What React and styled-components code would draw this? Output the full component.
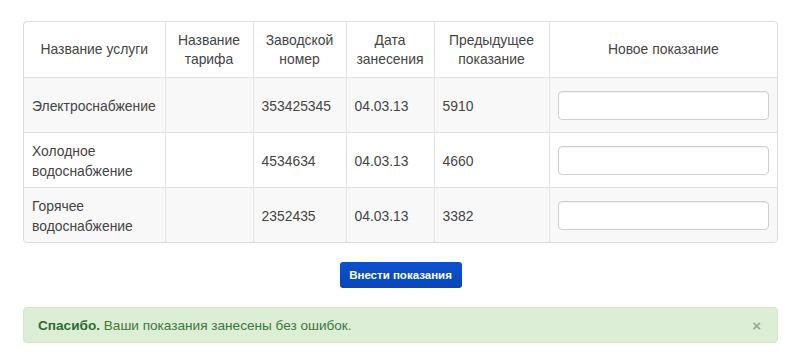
import React from "react";
import styled, { createGlobalStyle } from "styled-components";

const Global = createGlobalStyle`
  html, body { margin: 0; padding: 0; background: #fff; }
  body { font-family: "Liberation Sans", Arial, sans-serif; color: #333; }
`;

const Page = styled.div`
  width: 800px;
  height: 354px;
  box-sizing: border-box;
  padding: 21px 22px 0 23px;
  display: flex;
  flex-direction: column;
  align-items: stretch;
`;

const TableWrap = styled.div`
  border: 1px solid #dcdcdc;
  border-radius: 4px;
  overflow: hidden;
`;

const Table = styled.table`
  width: 100%;
  border-collapse: collapse;
  table-layout: fixed;
  font-size: 13.9px;
`;

const Th = styled.th`
  font-weight: normal;
  text-align: center;
  vertical-align: middle;
  color: #444;
  line-height: 19px;
  padding: 0 6px;
  height: 55px;
  border-left: 1px solid #e2e2e2;
  &:first-child { border-left: none; }
`;

const Tr = styled.tr`
  background: ${(p) => (p.$striped ? "#f8f8f8" : "#fff")};
  border-top: 1px solid #e2e2e2;
`;

const Td = styled.td`
  color: #444;
  vertical-align: middle;
  line-height: 20px;
  padding: 1px 8px 0;
  height: 53px;
  border-left: 1px solid #e2e2e2;
  &:first-child { border-left: none; }
`;

const Input = styled.input`
  display: block;
  box-sizing: border-box;
  width: 100%;
  height: 29px;
  margin-top: -1px;
  border: 1px solid #cfcfcf;
  border-radius: 4px;
  background: #fff;
  box-shadow: inset 0 1px 1px rgba(0,0,0,0.06);
`;

const ButtonRow = styled.div`
  display: flex;
  justify-content: center;
  margin-top: 19px;
`;

const Button = styled.button`
  width: 122px;
  height: 26px;
  border: none;
  border-radius: 3px;
  background: linear-gradient(#0c52cc, #0745bb);
  color: #fff;
  font-family: "Liberation Sans", Arial, sans-serif;
  font-weight: bold;
  font-size: 11.5px;
  padding: 0;
  cursor: pointer;
`;

const Alert = styled.div`
  margin-top: 19px;
  height: 36px;
  box-sizing: border-box;
  display: flex;
  align-items: center;
  justify-content: space-between;
  padding: 0 16px 0 14px;
  background: #dcefd6;
  border: 1px solid #d3e8c8;
  border-radius: 4px;
  color: #3c763d;
  font-size: 13.6px;
`;

const Strong = styled.strong`
  font-weight: bold;
  color: #2f6b33;
`;

const Close = styled.span`
  color: #9aa89a;
  font-size: 15px;
  font-weight: bold;
  line-height: 1;
`;

const cols = [141, 88, 93, 88, 115, null];
const headers = [
  "Название услуги",
  ["Название", "тарифа"],
  ["Заводской", "номер"],
  ["Дата", "занесения"],
  ["Предыдущее", "показание"],
  "Новое показание",
];

const rows = [
  { name: "Электроснабжение", num: "353425345", date: "04.03.13", prev: "5910" },
  { name: ["Холодное", "водоснабжение"], num: "4534634", date: "04.03.13", prev: "4660" },
  { name: ["Горячее", "водоснабжение"], num: "2352435", date: "04.03.13", prev: "3382" },
];

const lines = (t) =>
  Array.isArray(t) ? t.map((l, i) => (
    <React.Fragment key={i}>{i > 0 && <br />}{l}</React.Fragment>
  )) : t;

export default function App() {
  return (
    <>
      <Global />
      <Page>
        <TableWrap>
          <Table>
            <colgroup>
              {cols.map((w, i) => <col key={i} style={w ? { width: w } : undefined} />)}
            </colgroup>
            <thead>
              <tr>
                {headers.map((h, i) => <Th key={i}>{lines(h)}</Th>)}
              </tr>
            </thead>
            <tbody>
              {rows.map((r, i) => (
                <Tr key={i} $striped={i % 2 === 0}>
                  <Td>{lines(r.name)}</Td>
                  <Td></Td>
                  <Td>{r.num}</Td>
                  <Td>{r.date}</Td>
                  <Td>{r.prev}</Td>
                  <Td><Input type="text" /></Td>
                </Tr>
              ))}
            </tbody>
          </Table>
        </TableWrap>
        <ButtonRow>
          <Button>Внести показания</Button>
        </ButtonRow>
        <Alert>
          <span><Strong>Спасибо.</Strong> Ваши показания занесены без ошибок.</span>
          <Close>×</Close>
        </Alert>
      </Page>
    </>
  );
}
